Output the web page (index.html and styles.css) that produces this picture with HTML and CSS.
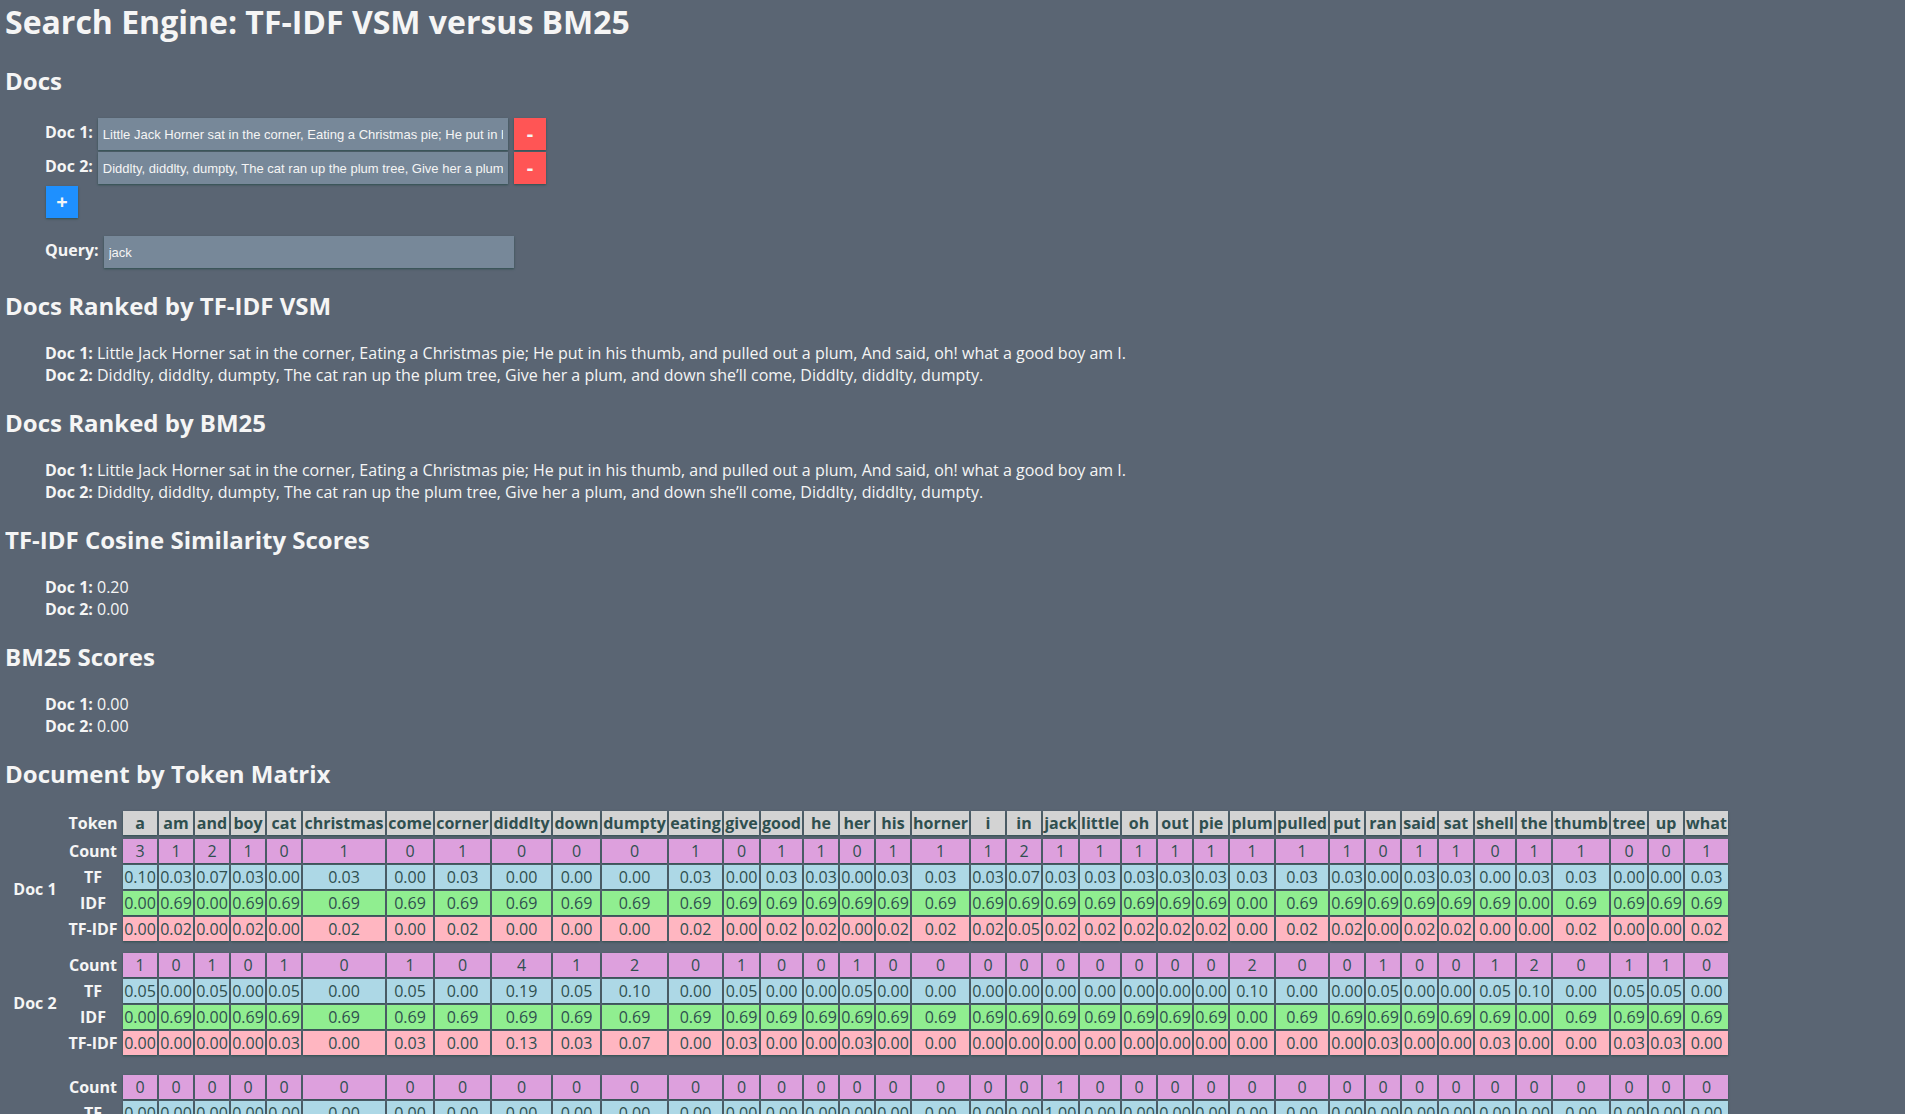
FILE: index.html
```
<!DOCTYPE html>
<html lang="en">
<head>
<meta charset="utf-8">
<title>Search Engine: TF-IDF VSM versus BM25</title>
<link rel="stylesheet" href="styles.css">
</head>
<body>
<h1>Search Engine: TF-IDF VSM versus BM25</h1>

<h2>Docs</h2>
<form class="search">
  <div class="field">
    <label for="doc1">Doc 1:</label>
    <input type="text" id="doc1" value="Little Jack Horner sat in the corner, Eating a Christmas pie; He put in his thumb, and pulled out a plum, And said, oh! what a good boy am I.">
    <button type="button" class="remove" aria-label="Remove doc 1">-</button>
  </div>
  <div class="field">
    <label for="doc2">Doc 2:</label>
    <input type="text" id="doc2" value="Diddlty, diddlty, dumpty, The cat ran up the plum tree, Give her a plum, and down she’ll come, Diddlty, diddlty, dumpty.">
    <button type="button" class="remove" aria-label="Remove doc 2">-</button>
  </div>
  <button type="button" class="add" aria-label="Add doc">+</button>
  <div class="field query">
    <label for="query">Query:</label>
    <input type="text" id="query" value="jack">
  </div>
</form>

<h2>Docs Ranked by TF-IDF VSM</h2>
<div class="results">
  <div><b>Doc 1:</b> Little Jack Horner sat in the corner, Eating a Christmas pie; He put in his thumb, and pulled out a plum, And said, oh! what a good boy am I.</div>
  <div><b>Doc 2:</b> Diddlty, diddlty, dumpty, The cat ran up the plum tree, Give her a plum, and down she’ll come, Diddlty, diddlty, dumpty.</div>
</div>

<h2>Docs Ranked by BM25</h2>
<div class="results">
  <div><b>Doc 1:</b> Little Jack Horner sat in the corner, Eating a Christmas pie; He put in his thumb, and pulled out a plum, And said, oh! what a good boy am I.</div>
  <div><b>Doc 2:</b> Diddlty, diddlty, dumpty, The cat ran up the plum tree, Give her a plum, and down she’ll come, Diddlty, diddlty, dumpty.</div>
</div>

<h2>TF-IDF Cosine Similarity Scores</h2>
<div class="results">
  <div><b>Doc 1:</b> 0.20</div>
  <div><b>Doc 2:</b> 0.00</div>
</div>

<h2>BM25 Scores</h2>
<div class="results">
  <div><b>Doc 1:</b> 0.00</div>
  <div><b>Doc 2:</b> 0.00</div>
</div>

<h2>Document by Token Matrix</h2>
<table class="matrix" id="matrix"></table>

<script src="matrix.js"></script>
</body>
</html>
```
FILE: styles.css
```
body {
  margin: 0 5px;
  background: #5a6573;
  color: whitesmoke;
  font: 16px/22px "Open Sans", sans-serif;
}

h1 {
  margin: 0 0 20px;
  font-size: 32px;
  line-height: 44px;
}

h2 {
  margin: 20px 0 19px;
  font-size: 24px;
  line-height: 33px;
}

.search,
.results {
  margin: 20px 0 20px 40px;
}

.field {
  display: flex;
  align-items: flex-start;
  padding: 1px 0;
}

.field label {
  font-weight: bold;
  line-height: 28px;
}

.field input {
  box-sizing: border-box;
  width: 410px;
  height: 32px;
  margin: 0 6px 0 5px;
  padding: 0 5px;
  border: 0;
  background: lightslategray;
  color: whitesmoke;
  font: 13px "Liberation Sans", Arial, sans-serif;
  box-shadow: 0 1px 2px darkslategray;
}

.search button {
  width: 32px;
  height: 32px;
  padding: 0;
  border: 0;
  color: whitesmoke;
  font: bold 20px/32px "Open Sans", sans-serif;
  box-shadow: 0 1px 2px darkslategray;
}

.search .remove {
  background: #ff5555;
}

.search .add {
  display: block;
  margin: 1px;
  background: dodgerblue;
}

.query {
  margin-top: 17px;
}

.matrix {
  border-spacing: 2px;
  text-align: center;
}

.matrix th,
.matrix td {
  box-sizing: border-box;
  padding: 1px;
}

.matrix th[scope="row"] {
  padding: 1px 3px;
}

.matrix th[scope="rowgroup"] {
  padding: 0 3px 2px;
}

.matrix th[scope="col"],
.matrix td {
  color: darkslategray;
  box-shadow: 0 1px 2px darkslategray;
}

.matrix th[scope="col"] { background: lightgray; }
.matrix .count td { background: plum; }
.matrix .tf td { background: lightblue; }
.matrix .idf td { background: lightgreen; }
.matrix .tf-idf td { background: lightpink; }

.matrix .gap td {
  padding: 0;
  box-shadow: none;
}

.matrix .gap-doc td { height: 8px; }
.matrix .gap-query td { height: 16px; }
```
FILE: matrix.js
```
const tokenize = (text) =>
  text.toLowerCase().replace(/[^a-z\s]/g, "").split(/\s+/).filter(Boolean);

const valueOf = (id) => document.getElementById(id).value;
const docs = [tokenize(valueOf("doc1")), tokenize(valueOf("doc2"))];
const vocabulary = [...new Set(docs.flat())].sort();

const count = (words, token) => words.filter((word) => word === token).length;
const tf = (words, token) => count(words, token) / words.length;
const idf = (token) =>
  Math.log(docs.length / docs.filter((words) => words.includes(token)).length);

const measures = [
  ["Count", "count", (words, token) => count(words, token)],
  ["TF", "tf", (words, token) => tf(words, token).toFixed(2)],
  ["IDF", "idf", (words, token) => idf(token).toFixed(2)],
  ["TF-IDF", "tf-idf", (words, token) => (tf(words, token) * idf(token)).toFixed(2)],
];

const header = `<thead><tr><th></th><th scope="row">Token</th>${vocabulary
  .map((token) => `<th scope="col">${token}</th>`)
  .join("")}</tr></thead>`;

const group = (name, words, gap) =>
  `<tbody><tr class="gap ${gap}"><td></td></tr>${measures
    .map(([label, className, measure], i) => `<tr class="${className}">${
      i === 0 ? `<th scope="rowgroup" rowspan="4">${name}</th>` : ""
    }<th scope="row">${label}</th>${vocabulary
      .map((token) => `<td>${measure(words, token)}</td>`)
      .join("")}</tr>`)
    .join("")}</tbody>`;

const matrix = document.getElementById("matrix");
matrix.innerHTML =
  header +
  group("Doc 1", docs[0], "") +
  group("Doc 2", docs[1], "gap-doc") +
  group("Query", tokenize(valueOf("query")), "gap-query");

// Round every column up to whole pixels so that the gaps between cells stay even.
const columns = [...matrix.querySelectorAll("thead th")];
const widths = columns.map((cell) => Math.ceil(cell.getBoundingClientRect().width));
columns.forEach((cell, i) => {
  cell.style.minWidth = `${widths[i]}px`;
});
```
